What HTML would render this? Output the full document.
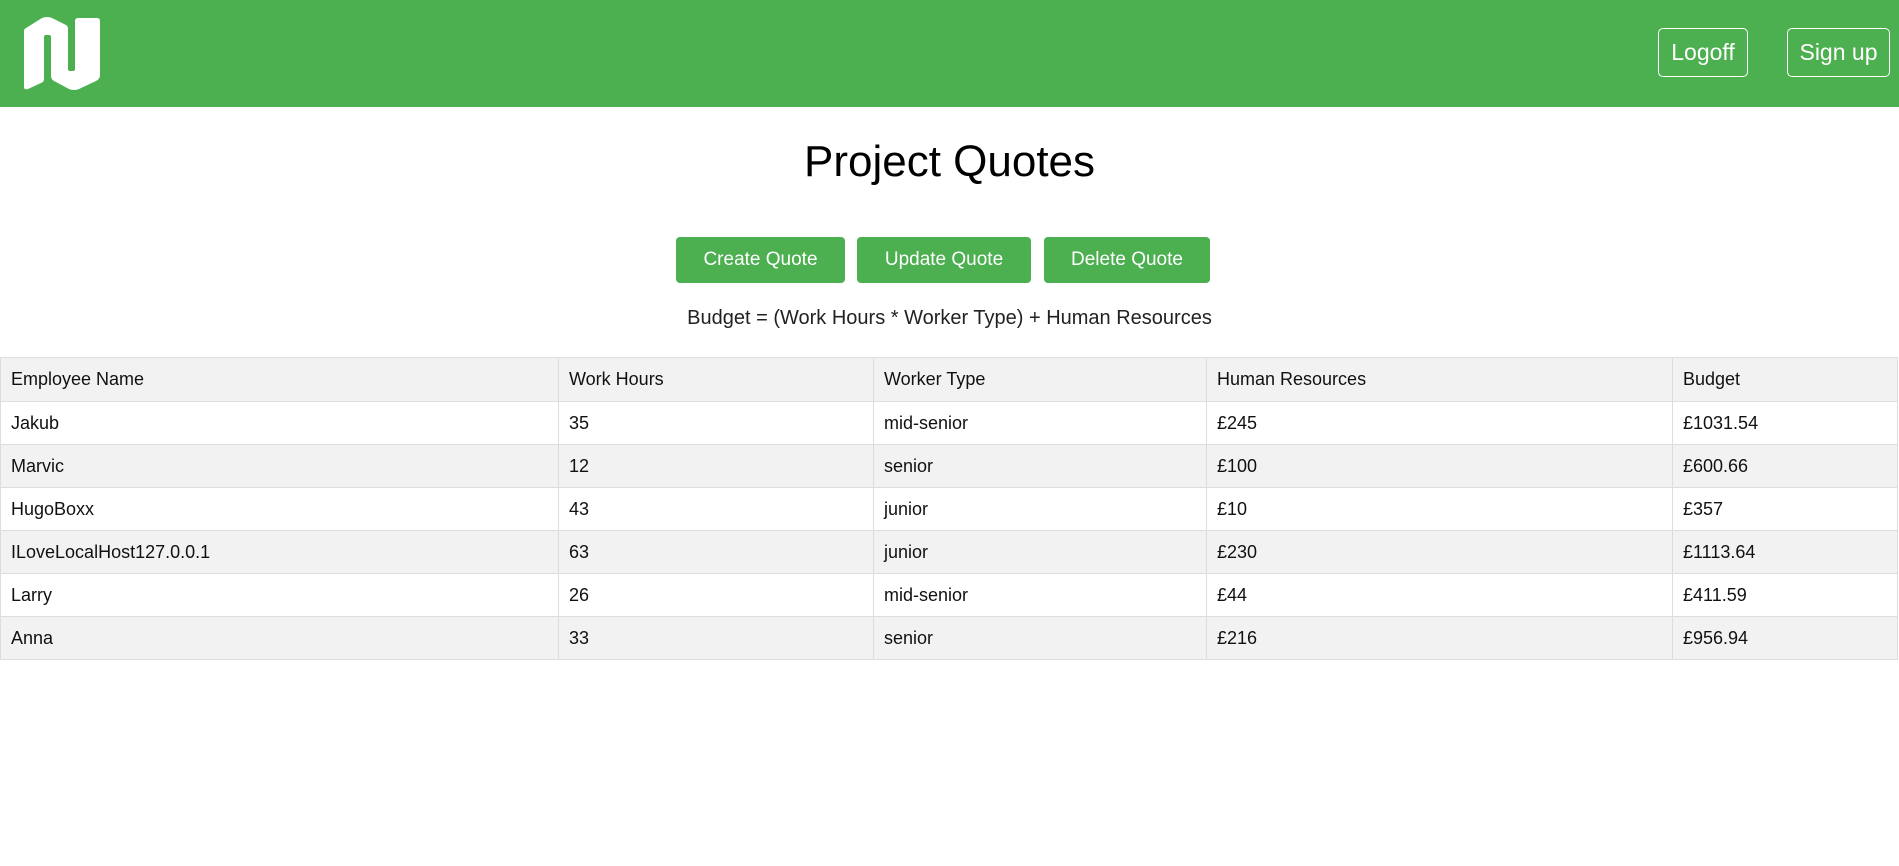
<!DOCTYPE html>
<html><head><meta charset="utf-8"><style>
body{margin:0;width:1899px;height:866px;background:#fff;font-family:"Liberation Sans",sans-serif;overflow:hidden}
.hd{height:107px;background:#4caf50;position:relative}
.nb{position:absolute;top:28px;height:47px;border:1px solid #fff;border-radius:5px;color:#fff;font-size:23px;line-height:47px;text-align:center;box-sizing:content-box}
h1{margin:0;position:absolute;top:137px;width:100%;text-align:center;font-weight:normal;font-size:44px;color:#000}
.b{position:absolute;top:237px;height:46px;background:#4caf50;color:#fff;border-radius:4px;font-size:19px;line-height:46px;text-align:center}
.f{position:absolute;top:307px;width:100%;text-align:center;font-size:20px;color:#222}
table{position:absolute;top:357px;left:0;width:1898px;border-collapse:collapse;font-size:18px;color:#111}
td{border:1px solid #ddd;height:43px;padding:0 10px;box-sizing:border-box}
tr:nth-child(odd){background:#f2f2f2}
</style></head><body>
<div class="hd">
<svg style="position:absolute;left:24px;top:15px" width="76" height="76" viewBox="0 0 76 76"><path d="M2 13 L18 3 Q23 1 28 3 L42 10 Q44 11 44 14 L44 54 Q44 56 46 56 L49 56 Q51 56 51 54 L51 6 Q51 3 54 3 L73 3 Q76 3 76 6 L76 60 Q76 64 72 66 L55 74 Q50 76 45 74 L30 66 Q27 64 27 61 L27 22 Q27 20 25 20 L22 20 Q20 20 20 22 L20 64 Q20 67 17 68 L4 74 Q0 75 0 72 L0 16 Q0 14 2 13Z" fill="#fff"/></svg>
<div class="nb" style="left:1658px;width:88px">Logoff</div>
<div class="nb" style="left:1787px;width:101px">Sign up</div>
</div>
<h1>Project Quotes</h1>
<div class="b" style="left:676px;width:169px">Create Quote</div>
<div class="b" style="left:857px;width:174px">Update Quote</div>
<div class="b" style="left:1044px;width:166px">Delete Quote</div>
<div class="f">Budget = (Work Hours * Worker Type) + Human Resources</div>
<table>
<colgroup><col style="width:558px"><col style="width:315px"><col style="width:333px"><col style="width:466px"><col></colgroup>
<tr><td style="height:44px">Employee Name</td><td>Work Hours</td><td>Worker Type</td><td>Human Resources</td><td>Budget</td></tr>
<tr style="background:#fff"><td>Jakub</td><td>35</td><td>mid-senior</td><td>£245</td><td>£1031.54</td></tr>
<tr><td>Marvic</td><td>12</td><td>senior</td><td>£100</td><td>£600.66</td></tr>
<tr style="background:#fff"><td>HugoBoxx</td><td>43</td><td>junior</td><td>£10</td><td>£357</td></tr>
<tr><td>ILoveLocalHost127.0.0.1</td><td>63</td><td>junior</td><td>£230</td><td>£1113.64</td></tr>
<tr style="background:#fff"><td>Larry</td><td>26</td><td>mid-senior</td><td>£44</td><td>£411.59</td></tr>
<tr><td>Anna</td><td>33</td><td>senior</td><td>£216</td><td>£956.94</td></tr>
</table>
</body></html>
